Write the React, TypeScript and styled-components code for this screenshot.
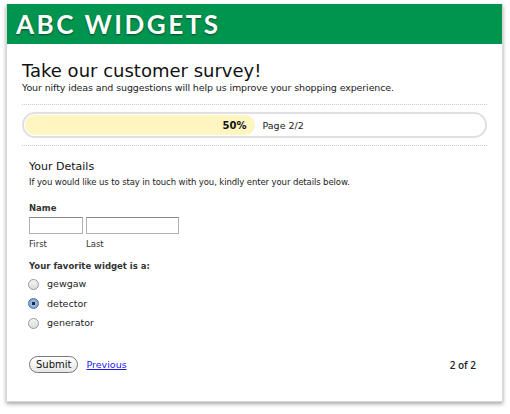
import React from "react";
import styled, {createGlobalStyle} from "styled-components";

const Global = createGlobalStyle`
html, body { margin: 0; padding: 0; background: #fff; }
body { font-family: "DejaVu Sans", Verdana, sans-serif; color: #222; }
`;

const Page = styled.div`
padding: 4px 7px 0 6px;
width: 510px;
height: 414px;
box-sizing: border-box;
`;

const Card = styled.div`
width: 497px;
height: 398px;
box-sizing: border-box;
border: 1px solid #d6d6d6;
border-top: none;
background: #fff;
box-shadow: 0 2px 4px rgba(0, 0, 0, 0.35);
display: flex;
flex-direction: column;
`;

const Header = styled.header`
height: 40px;
background: #00954f;
display: flex;
align-items: center;
padding-left: 9px;
`;

const Brand = styled.h1`
margin: 0;
font-family: "Lato", sans-serif;
font-weight: 700;
font-size: 26px;
letter-spacing: 2.5px;
color: #fff;
text-shadow: 0 1px 2px rgba(0, 0, 0, 0.5);
`;

const Body = styled.div`
padding: 17px 15px 0 15px;
display: flex;
flex-direction: column;
flex: 1;
`;

const Title = styled.h2`
margin: 0;
font-weight: normal;
font-size: 18px;
line-height: 20px;
color: #111;
`;

const Sub = styled.p`
margin: 0;
font-size: 9.5px;
letter-spacing: -0.12px;
line-height: 13px;
color: #222;
`;

const Divider = styled.hr<{ top: number; bottom: number }>`
border: none;
border-top: 1px dotted #c8c8c8;
margin: ${p => p.top}px 0 ${p => p.bottom}px;
height: 0;
`;

const Progress = styled.div`
height: 26px;
box-sizing: border-box;
border: 2px solid #e0e0e0;
border-radius: 13px;
display: flex;
align-items: center;
padding: 1px;
font-size: 10px;
`;

const Fill = styled.div`
height: 100%;
background: #fff5c0;
border-radius: 11px;
display: flex;
align-items: center;
justify-content: flex-end;
padding-right: 8px;
box-sizing: border-box;
font-weight: bold;
color: #111;
`;

const PageLabel = styled.span`
margin-left: 8px;
font-size: 9.5px;
color: #222;
`;

const Form = styled.form`
padding-left: 7px;
display: flex;
flex-direction: column;
flex: 1;
`;

const Section = styled.h3`
margin: 0;
font-weight: normal;
font-size: 11px;
line-height: 16px;
color: #111;
`;

const Note = styled.p`
margin: 1px 0 0;
font-size: 8.5px;
letter-spacing: -0.1px;
line-height: 12px;
`;

const FieldLabel = styled.div<{ top: number }>`
margin-top: ${p => p.top}px;
font-size: 8.5px;
line-height: 12px;
font-weight: bold;
color: #333;
`;

const NameRow = styled.div`
display: flex;
gap: 3px;
margin-top: 3px;
`;

const NamePart = styled.label`
display: flex;
flex-direction: column;
font-size: 8.5px;
line-height: 11px;
color: #333;
gap: 5px;
`;

const TextBox = styled.input<{ w: number }>`
width: ${p => p.w}px;
height: 17px;
box-sizing: border-box;
border: 1px solid #b0b0b0;
border-top-color: #8a8a8a;
margin: 0;
padding: 0;
`;

const Options = styled.div`
display: flex;
flex-direction: column;
gap: 5.5px;
margin-top: 5px;
`;

const Option = styled.label`
display: flex;
align-items: center;
gap: 8px;
font-size: 9.5px;
line-height: 14px;
color: #222;
`;

const Radio = styled.span<{ on?: boolean }>`
width: 11px;
height: 11px;
border-radius: 50%;
box-sizing: border-box;
border: 1px solid ${p => p.on ? "#50709a" : "#999"};
background: ${p => p.on
    ? "radial-gradient(circle, #1c2a40 0 1.6px, #9cbbe3 2px, #6d93c8 100%)"
    : "linear-gradient(#f4f4f4, #dcdcdc)"};
margin-left: -1px;
`;

const Footer = styled.div`
display: flex;
align-items: center;
margin-top: auto;
margin-bottom: 28px;
padding-right: 11px;
font-size: 9.5px;
`;

const Submit = styled.button`
font-family: inherit;
font-size: 10px;
height: 17px;
padding: 0 6px;
border: 1px solid #777;
border-radius: 9px;
background: linear-gradient(#fff, #e6e6e6);
color: #111;
`;

const Prev = styled.a`
margin-left: 8px;
color: #1a1aee;
text-decoration: underline;
`;

const Count = styled.span`
margin-left: auto;
font-family: "Open Sans", sans-serif;
font-weight: 600;
font-size: 10px;
color: #222;
`;

export default function App() {
    const widgets = ["gewgaw", "detector", "generator"];
    return <>
        <Global/>
        <Page>
            <Card>
                <Header><Brand>ABC WIDGETS</Brand></Header>
                <Body>
                    <Title>Take our customer survey!</Title>
                    <Sub>Your nifty ideas and suggestions will help us improve your shopping experience.</Sub>
                    <Divider top={10} bottom={7}/>
                    <Progress>
                        <Fill style={{width: "50%"}}>50%</Fill>
                        <PageLabel>Page 2/2</PageLabel>
                    </Progress>
                    <Divider top={7} bottom={13}/>
                    <Form onSubmit={e => e.preventDefault()}>
                        <Section>Your Details</Section>
                        <Note>If you would like us to stay in touch with you, kindly enter your details below.</Note>
                        <FieldLabel top={14}>Name</FieldLabel>
                        <NameRow>
                            <NamePart><TextBox w={54}/>First</NamePart>
                            <NamePart><TextBox w={93}/>Last</NamePart>
                        </NameRow>
                        <FieldLabel top={10}>Your favorite widget is a:</FieldLabel>
                        <Options>
                            {widgets.map(w => <Option key={w}><Radio on={w === "detector"}/>{w}</Option>)}
                        </Options>
                        <Footer>
                            <Submit type="submit">Submit</Submit>
                            <Prev href="#">Previous</Prev>
                            <Count>2 of 2</Count>
                        </Footer>
                    </Form>
                </Body>
            </Card>
        </Page>
    </>;
}
